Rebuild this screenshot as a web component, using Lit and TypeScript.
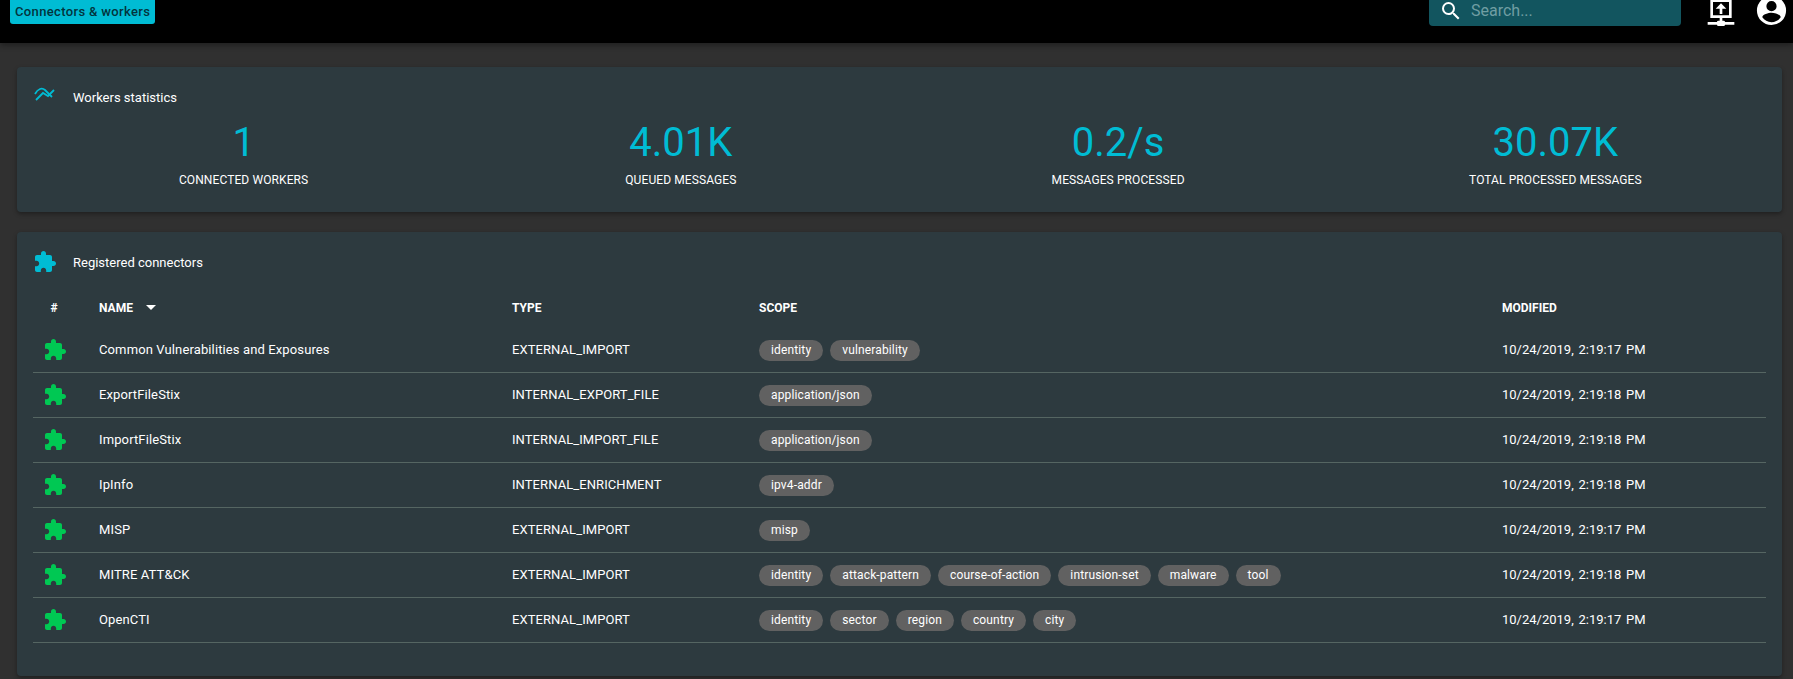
import { LitElement, html, css, svg } from "lit";
import { customElement } from "lit/decorators.js";

const puzzle = svg`<path d="M20.5 11H19V7c0-1.1-.9-2-2-2h-4V3.5C13 2.12 11.88 1 10.5 1S8 2.12 8 3.5V5H4c-1.1 0-1.99.9-1.99 2v3.8H3.5c1.49 0 2.7 1.21 2.7 2.7s-1.21 2.7-2.7 2.7H2V20c0 1.1.9 2 2 2h3.8v-1.5c0-1.49 1.21-2.7 2.7-2.7 1.49 0 2.7 1.21 2.7 2.7V22H17c1.1 0 2-.9 2-2v-4h1.5c1.38 0 2.5-1.12 2.5-2.5S21.88 11 20.5 11z"/>`;

const rows = [
  ["Common Vulnerabilities and Exposures", "EXTERNAL_IMPORT", ["identity", "vulnerability"], "10/24/2019, 2:19:17 PM"],
  ["ExportFileStix", "INTERNAL_EXPORT_FILE", ["application/json"], "10/24/2019, 2:19:18 PM"],
  ["ImportFileStix", "INTERNAL_IMPORT_FILE", ["application/json"], "10/24/2019, 2:19:18 PM"],
  ["IpInfo", "INTERNAL_ENRICHMENT", ["ipv4-addr"], "10/24/2019, 2:19:18 PM"],
  ["MISP", "EXTERNAL_IMPORT", ["misp"], "10/24/2019, 2:19:17 PM"],
  ["MITRE ATT&CK", "EXTERNAL_IMPORT", ["identity", "attack-pattern", "course-of-action", "intrusion-set", "malware", "tool"], "10/24/2019, 2:19:18 PM"],
  ["OpenCTI", "EXTERNAL_IMPORT", ["identity", "sector", "region", "country", "city"], "10/24/2019, 2:19:17 PM"],
] as [string, string, string[], string][];

const stats = [
  ["1", "Connected workers"],
  ["4.01K", "Queued messages"],
  ["0.2/s", "Messages processed"],
  ["30.07K", "Total processed messages"],
];

@customElement("app-root")
export class AppRoot extends LitElement {
  static styles = css`
    :host { display: block; width: 100%; height: 679px; overflow: hidden; background: #303030; font-family: Roboto, sans-serif; color: #fff; font-size: 13px; }
    .top { height: 43px; background: #000; display: flex; align-items: flex-start; box-sizing: border-box; padding-left: 10px; box-shadow: 0 2px 6px rgba(0,0,0,.4); position: relative; overflow: hidden; }
    .crumb { height: 24px; line-height: 23px; background: #00bcd4; color: #03343d; border-radius: 0 0 3px 3px; padding: 0 5px; font-size: 13px; font-weight: 500; letter-spacing: .35px; }
    .spacer { flex: 1; }
    .search { width: 252px; height: 26px; background: #12555f; border-radius: 0 0 4px 4px; display: flex; align-items: center; gap: 8px; padding: 0 0 6px 10px; box-sizing: border-box; color: #709ea3; font-size: 16px; }
    .search svg { width: 24px; height: 24px; fill: #fff; margin-top: 2px; flex: none; }
    .ico { fill: #fff; display: block; flex: none; }
    .net { width: 32px; height: 32px; margin: -2px 0 0 24px; }
    .user { width: 35px; height: 35px; margin: -7px 4px 0 17px; }
    .main { padding: 24px 11px 0 17px; display: flex; flex-direction: column; gap: 20px; }
    .card { background: #2d3a3f; border-radius: 4px; box-shadow: 0 2px 4px rgba(0,0,0,.35); }
    .stats { height: 145px; box-sizing: border-box; padding: 18px 8px 0; }
    .head { display: flex; align-items: center; font-size: 13px; height: 24px; }
    .head .i { width: 24px; height: 24px; flex: none; margin: 0 16px 0 8px; }
    .grid { display: grid; grid-template-columns: repeat(4, 1fr); }
    .stat { text-align: center; }
    .num { color: #00bcd4; font-size: 40px; line-height: 47px; font-weight: 400; margin-top: 10px; }
    .lab { font-size: 12px; text-transform: uppercase; margin-top: 7px; line-height: 14px; letter-spacing: .1px; }
    .reg { height: 444px; box-sizing: border-box; padding: 17px 16px 0; }
    .reg .head { margin-left: -8px; height: 26px; }
    .reg .head .i { fill: #00bcd4; }
    .thead, .row { display: grid; grid-template-columns: 66px 413px 247px 743px 1fr; align-items: center; }
    .thead { height: 39px; margin-top: 13px; margin-bottom: 1px; font-size: 12px; font-weight: 700; text-transform: uppercase; }
    .thead .c0 { text-align: center; padding-right: 24px; }
    .row { height: 45px; border-bottom: 1px solid #556562; box-sizing: border-box; font-size: 13px; }
    .row .pz { width: 24px; height: 24px; fill: #00c853; margin-left: 10px; display: block; }
    .txt { padding-bottom: 2px; }
    .name { letter-spacing: .12px; }
    .type { letter-spacing: .08px; }
    .date { word-spacing: 1.5px; }
    .sort { display: inline-block; margin-left: 13px; width: 0; height: 0; border: 5px solid transparent; border-top-color: #fff; border-bottom: 0; vertical-align: 2px; }
    .chips { display: flex; gap: 7px; }
    .chip { height: 21px; line-height: 21px; border-radius: 10.5px; background: #616161; padding: 0 12px; font-size: 12px; letter-spacing: .14px; white-space: nowrap; }
  `;

  render() {
    return html`
      <div class="top">
        <div class="crumb">Connectors &amp; workers</div>
        <div class="spacer"></div>
        <div class="search">
          <svg viewBox="0 0 24 24"><path d="M15.5 14h-.79l-.28-.27A6.47 6.47 0 0 0 16 9.5 6.5 6.5 0 1 0 9.5 16c1.61 0 3.09-.59 4.23-1.57l.27.28v.79l5 4.99L20.49 19l-4.99-5zm-6 0C7.01 14 5 11.99 5 9.5S7.01 5 9.5 5 14 7.01 14 9.5 11.99 14 9.5 14z"/></svg>
          <span>Search...</span>
        </div>
        <svg class="ico net" viewBox="0 0 24 24"><path d="M4 1h16v14H13v2h1a1 1 0 0 1 1 1h7v2h-7a1 1 0 0 1-1 1h-4a1 1 0 0 1-1-1H2v-2h7a1 1 0 0 1 1-1h1v-2H4V1zm2 2v10h12V3H6zm6 1 4 4h-3v4h-2V8H8l4-4z"/></svg>
        <svg class="ico user" viewBox="0 0 24 24"><path d="M12 2a10 10 0 1 0 0 20 10 10 0 0 0 0-20zm0 3.500A3.500 3.500 0 1 1 12 12.500 3.500 3.500 0 0 1 12 5.500zm0 14.500c-2.600 0-4.900-1.300-6.300-3.300.1-2 4.200-3.100 6.300-3.100s6.200 1.100 6.300 3.100C16.900 18.700 14.600 20 12 20z"/></svg>
      </div>
      <div class="main">
        <section class="card stats">
          <div class="head">
            <svg class="i" viewBox="0 0 24 24" fill="none" stroke="#00bcd4" stroke-width="1.8"><path d="M3 15l7-7 5 3 6-6"/><path d="M2 9c3-5.500 7-6.500 10-4l7 7"/></svg>
            <span>Workers statistics</span>
          </div>
          <div class="grid">
            ${stats.map(([n, l]) => html`<div class="stat"><div class="num">${n}</div><div class="lab">${l}</div></div>`)}
          </div>
        </section>
        <section class="card reg">
          <div class="head">
            <svg class="i" viewBox="0 0 24 24">${puzzle}</svg>
            <span>Registered connectors</span>
          </div>
          <div class="thead">
            <div class="c0">#</div>
            <div>Name<span class="sort"></span></div>
            <div>Type</div>
            <div>Scope</div>
            <div>Modified</div>
          </div>
          ${rows.map(([name, type, scope, date]) => html`
            <div class="row">
              <svg class="pz" viewBox="0 0 24 24">${puzzle}</svg>
              <div class="txt name">${name}</div>
              <div class="txt type">${type}</div>
              <div class="chips">${scope.map((s) => html`<span class="chip">${s}</span>`)}</div>
              <div class="txt date">${date}</div>
            </div>`)}
        </section>
      </div>
    `;
  }
}
